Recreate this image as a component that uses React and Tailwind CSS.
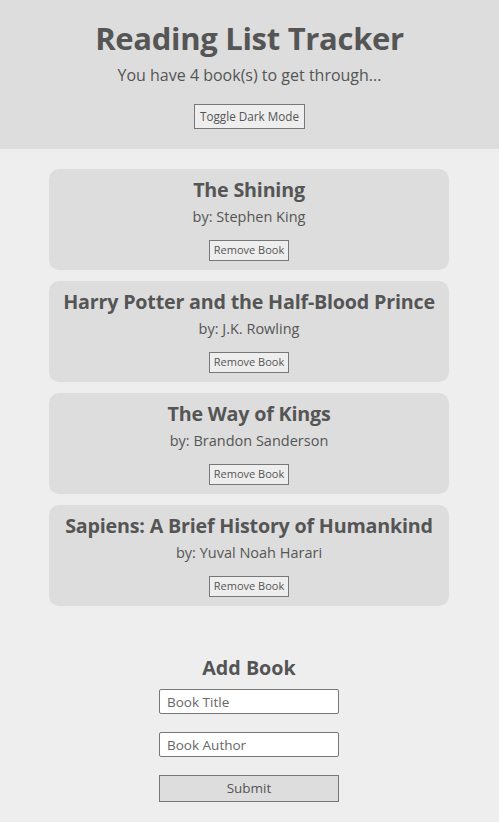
import React from "react";

const books = [
  { title: "The Shining", author: "Stephen King" },
  { title: "Harry Potter and the Half-Blood Prince", author: "J.K. Rowling" },
  { title: "The Way of Kings", author: "Brandon Sanderson" },
  { title: "Sapiens: A Brief History of Humankind", author: "Yuval Noah Harari" },
];

export default function App() {
  return (
    <div className="min-h-[822px] bg-[#eeeeee] text-[#555555]" style={{ fontFamily: '"Open Sans", "Noto Sans", sans-serif' }}>
      <header className="bg-[#dddddd] flex flex-col items-center pt-[18px] h-[149px]">
        <h1 className="text-[31px] font-bold leading-[40px] tracking-[-0.3px]">Reading List Tracker</h1>
        <p className="text-[16px] leading-[20px] mt-[7px]">You have 4 book(s) to get through...</p>
        <button className="mt-[19px] h-[25px] px-[5px] border border-[#777] bg-[#eeeeee] text-[11.7px] text-[#555]">Toggle Dark Mode</button>
      </header>
      <main className="flex flex-col items-start pl-[49px] pt-[20px] gap-[11px]">
        {books.map((b) => (
          <div key={b.title} className="w-[400px] h-[101px] rounded-[10px] bg-[#dddddd] flex flex-col items-center pt-[7px]">
            <h2 className="text-[19.7px] font-bold leading-[27px] tracking-[-0.2px]">{b.title}</h2>
            <p className="text-[14.5px] leading-[20px] mt-[4px]">by: {b.author}</p>
            <button className="mt-[13px] h-[21px] px-[4px] border border-[#777] bg-[#eeeeee] text-[11px] text-[#555]">Remove Book</button>
          </div>
        ))}
      </main>
      <section className="flex flex-col items-start pl-[159px] mt-[48px]">
        <h2 className="w-[180px] text-center text-[19.7px] font-bold leading-[26px] mt-[1px]">Add Book</h2>
        <input placeholder="Book Title" className="mt-[8px] w-[180px] h-[25px] px-[7px] border border-[#777] bg-white text-[13.5px] placeholder:text-[#666] rounded-[2px]" />
        <input placeholder="Book Author" className="mt-[18px] w-[180px] h-[25px] px-[7px] border border-[#777] bg-white text-[13.5px] placeholder:text-[#666] rounded-[2px]" />
        <button className="mt-[18px] w-[180px] h-[27px] border border-[#777] bg-[#dddddd] text-[13.5px] text-[#555]">Submit</button>
      </section>
    </div>
  );
}
